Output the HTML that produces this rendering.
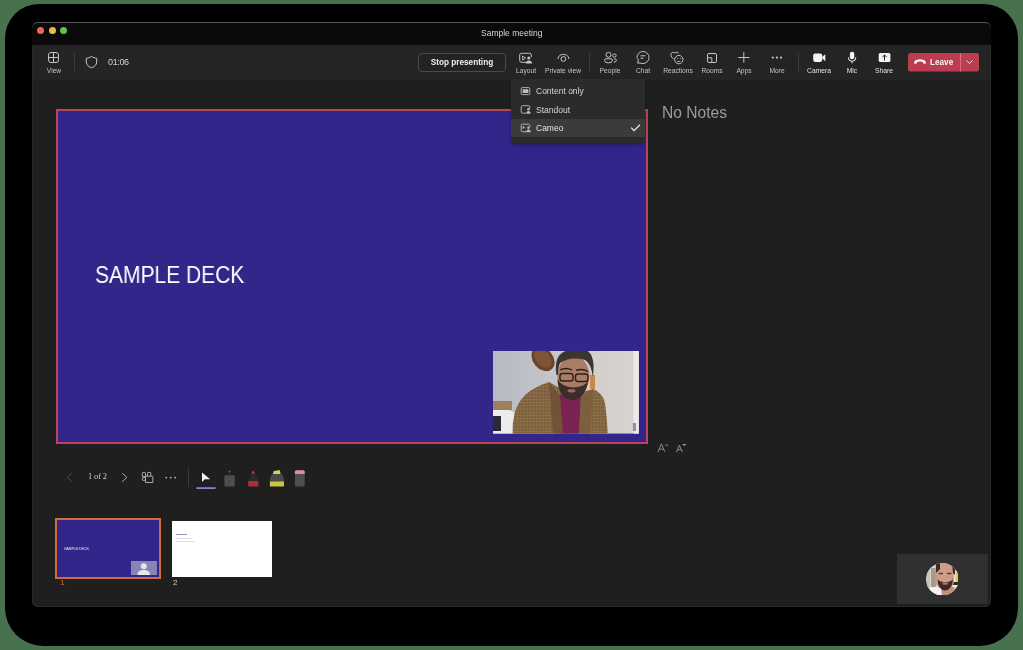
<!DOCTYPE html>
<html><head><meta charset="utf-8">
<style>
*{margin:0;padding:0;box-sizing:border-box}
html,body{width:1023px;height:650px;overflow:hidden;background:#48724e;font-family:"Liberation Sans",sans-serif}
div{will-change:transform}
div,svg,span{position:absolute}
#shadow{left:5px;top:4px;width:1013px;height:641.5px;background:#000;border-radius:34px 34px 38px 38px}
#win{left:32px;top:22px;width:959px;height:585px;background:#1f1f1f;border-radius:6px;overflow:hidden;box-shadow:inset 0 0 0 1px #2a2a2a}
#title{left:32px;top:22px;width:959px;height:23px;background:#0a0a0a;border-radius:6px 6px 0 0;border-top:1px solid #5a5a5a}
#tool{left:33px;top:45px;width:957px;height:34.6px;background:#242424}
.dot{width:7px;height:7px;border-radius:50%}
.lbl{font-size:6.7px;line-height:8px;color:#c2c2c2;text-align:center;width:50px;white-space:nowrap;top:67px}
svg{overflow:visible}
</style></head><body>
<div id="shadow"></div>
<div id="win"></div>
<div id="title"></div>
<div id="tool"></div>
<div class="dot" style="left:37px;top:27px;background:#ec6559"></div>
<div class="dot" style="left:49px;top:27px;background:#f0b847"></div>
<div class="dot" style="left:60px;top:27px;background:#5fc24d"></div>
<div style="left:481px;top:29px;font-size:8.5px;line-height:9px;color:#d8d8d8">Sample meeting</div>

<!-- toolbar -->
<svg style="left:0;top:0" width="1023" height="650" viewBox="0 0 1023 650">
 <g fill="none" stroke="#c4c4c4" stroke-width="1">
  <!-- view grid -->
  <rect x="48.5" y="52.5" width="10" height="10" rx="2.5"/>
  <line x1="53.5" y1="52.5" x2="53.5" y2="62.5"/><line x1="48.5" y1="57.5" x2="58.5" y2="57.5"/>
  <!-- shield -->
  <path d="M91.5 56.3 C89.5 57.8 88 58.2 86.3 58.2 V62 C86.3 65 88.6 66.8 91.5 67.8 C94.4 66.8 96.7 65 96.7 62 V58.2 C95 58.2 93.5 57.8 91.5 56.3Z"/>
 </g>
 <line x1="74.5" y1="53" x2="74.5" y2="71" stroke="#3c3c3c"/>
 <line x1="589.5" y1="53" x2="589.5" y2="72" stroke="#3c3c3c"/>
 <line x1="798.5" y1="53" x2="798.5" y2="72" stroke="#3c3c3c"/>
</svg>
<div style="left:107.5px;top:57px;font-size:9px;line-height:10px;color:#d2d2d2;letter-spacing:-0.35px">01:06</div>
<div class="lbl" style="left:28.5px">View</div>

<div style="left:418px;top:53px;width:88px;height:19px;border:1px solid #4a4a4a;border-radius:4px;background:#232323"></div>
<div style="left:418px;top:58px;width:88px;text-align:center;font-size:8.2px;line-height:10px;font-weight:bold;color:#f0f0f0">Stop presenting</div>
<svg style="left:0;top:0" width="1023" height="650" viewBox="0 0 1023 650">
 <g fill="none" stroke="#c4c4c4" stroke-width="1">
  <!-- layout -->
  <path d="M526 62.3 H521.5 Q519.7 62.3 519.7 60.5 V55 Q519.7 53.3 521.5 53.3 H529.5 Q531.3 53.3 531.3 55 V57"/>
  <path d="M522.6 56 L525.6 58 L522.6 60 Z" stroke-width="0.9"/>
  <!-- eye -->
  <path d="M557.8 59 A5.7 5.7 0 0 1 569 59"/>
  <circle cx="563.4" cy="59" r="2.4"/>
  <!-- people -->
  <circle cx="608.5" cy="54.8" r="2.5"/>
  <path d="M604.6 60 Q604.6 58.8 605.9 58.8 H611.1 Q612.4 58.8 612.4 60 V60.4 Q612.4 62.9 608.5 62.9 Q604.6 62.9 604.6 60.4Z"/>
  <circle cx="614.4" cy="55.6" r="1.7"/>
  <path d="M614 59 H615.2 Q616.4 59 616.4 60.2 Q616.4 62.2 613.8 62.2"/>
  <!-- chat -->
  <path d="M637.5 63 L638.5 60 Q637 58.3 637 57.5 A6 6 0 1 1 643 63.5 Q641 63.5 640 63 Z"/>
  <line x1="640.5" y1="55.8" x2="645.5" y2="55.8"/><line x1="640.5" y1="58.2" x2="643.5" y2="58.2"/>
  <!-- reactions -->
  <path d="M673.5 59.2 L671.9 57.3 Q670.3 55.3 671.2 53.4 Q672.3 51.6 674.3 52.6 L675 53.1 L675.7 52.6 Q677.6 51.6 678.6 53.2"/>
  <circle cx="678.8" cy="59.6" r="4.2"/>
  <!-- rooms -->
  <rect x="707.5" y="53.5" width="9" height="9" rx="1.5"/>
  <path d="M707.5 57.8 H711.8 V62.5"/>
  <!-- apps -->
  <line x1="743.8" y1="52" x2="743.8" y2="62.7"/><line x1="738.3" y1="57.5" x2="749.4" y2="57.5"/>
 </g>
 <g fill="#c4c4c4">
  <circle cx="528.8" cy="58" r="1.6"/>
  <path d="M525.8 63.5 Q525.8 60.5 528.8 60.5 Q532 60.5 532 63.5Z"/>
  <circle cx="677.3" cy="58.6" r="0.55"/><circle cx="680.3" cy="58.6" r="0.55"/><path d="M676.6 61 Q678.8 63 681 61 Z"/>
  <circle cx="772.8" cy="57.6" r="1.1"/><circle cx="776.9" cy="57.6" r="1.1"/><circle cx="781" cy="57.6" r="1.1"/>
 </g>
 <g fill="#f4f4f4">
  <!-- camera -->
  <rect x="813.2" y="53.4" width="9" height="8.5" rx="1.8"/>
  <path d="M821.5 57.6 L825.3 54.2 V61.2 Z"/>
  <!-- mic -->
  <rect x="849.9" y="51.7" width="4.4" height="7.5" rx="2.2"/>
  <!-- share -->
  <rect x="878.7" y="52.9" width="11.7" height="9.1" rx="1.6"/>
 </g>
 <path d="M848.3 57.3 Q848.3 61.3 852.1 61.3 Q855.9 61.3 855.9 57.3 M852.1 61.3 V63.3" fill="none" stroke="#f4f4f4" stroke-width="1"/>
 <path d="M884.5 60.5 V55 M882.3 57.2 L884.5 55 L886.7 57.2" fill="none" stroke="#262626" stroke-width="1"/>
 <!-- leave -->
 <rect x="908" y="53" width="71" height="18.5" rx="2.5" fill="#bc3d52"/>
 <line x1="960.5" y1="53" x2="960.5" y2="71.5" stroke="#e67a8a" stroke-width="0.8"/>
 <path d="M966.5 60.5 L969.5 63.5 L972.5 60.5" fill="none" stroke="#f4f4f4" stroke-width="0.9"/>
 <path d="M914 63.5 Q913.6 61.5 915.5 60.3 Q920 58 924.5 60.3 Q926.4 61.5 926 63.5 L923.5 63.8 L922.8 62 Q920 61.2 917.2 62 L916.5 63.8 Z" fill="#f4f4f4"/>
</svg>
<div style="left:930px;top:57.5px;font-size:8.2px;line-height:10px;color:#f6f6f6;font-weight:bold">Leave</div>
<div class="lbl" style="left:500.5px">Layout</div>
<div class="lbl" style="left:538.3px">Private view</div>
<div class="lbl" style="left:585.3px">People</div>
<div class="lbl" style="left:618px">Chat</div>
<div class="lbl" style="left:652.5px">Reactions</div>
<div class="lbl" style="left:687px">Rooms</div>
<div class="lbl" style="left:719.3px">Apps</div>
<div class="lbl" style="left:751.8px">More</div>
<div class="lbl" style="left:794.3px;color:#e4e4e4">Camera</div>
<div class="lbl" style="left:826.7px;color:#e4e4e4">Mic</div>
<div class="lbl" style="left:859.3px;color:#e4e4e4">Share</div>

<!-- slide -->
<div style="left:56px;top:108.5px;width:592px;height:334.5px;background:#32268a;border:2px solid #bb4559"></div>
<div style="left:95px;top:262px;font-size:23.6px;line-height:26px;color:#fff;transform:scaleX(0.89);transform-origin:0 0;white-space:nowrap">SAMPLE DECK</div>
<div style="left:662px;top:103.5px;font-size:15.6px;line-height:18px;color:#9c9c9c;white-space:nowrap">No Notes</div>
<!-- menu -->
<div style="left:511px;top:79px;width:133.5px;height:63.5px;background:#2b2b2b;border-radius:0 0 4px 4px;box-shadow:0 3px 5px -1px rgba(0,0,0,0.35)"></div>
<div style="left:511px;top:118.8px;width:133.5px;height:18.4px;background:#3b3b3b"></div>
<div style="left:536.3px;top:86px;font-size:8.5px;line-height:10px;color:#d6d6d6;white-space:nowrap">Content only</div>
<div style="left:536.3px;top:104.5px;font-size:8.5px;line-height:10px;color:#d6d6d6;white-space:nowrap">Standout</div>
<div style="left:536.3px;top:123px;font-size:8.5px;line-height:10px;color:#e6e6e6;white-space:nowrap">Cameo</div>
<svg style="left:0;top:0" width="1023" height="650" viewBox="0 0 1023 650">
 <path d="M631.2 127.6 L634 130.6 L640 124.8" fill="none" stroke="#f0f0f0" stroke-width="1.2"/>
 <g fill="none" stroke="#bdbdbd" stroke-width="0.9">
  <rect x="521.2" y="87.6" width="8.6" height="7" rx="1.2"/>
  <path d="M526 113.2 H522.5 Q521.2 113.2 521.2 112 V107 Q521.2 105.7 522.5 105.7 H528.5 Q529.8 105.7 529.8 107 V108.5"/>
  <path d="M526 131.7 H522.5 Q521.2 131.7 521.2 130.5 V125.5 Q521.2 124.2 522.5 124.2 H528.5 Q529.8 124.2 529.8 125.5 V127"/>
 </g>
 <g fill="#bdbdbd">
  <rect x="522.6" y="89.3" width="5.8" height="3.6" rx="0.5"/>
  <circle cx="528.4" cy="109.2" r="1.2"/><path d="M526.3 113.8 Q526.3 111 528.4 111 Q530.6 111 530.6 113.8Z"/>
  <circle cx="528.4" cy="127.7" r="1.2"/><path d="M526.3 132.3 Q526.3 129.5 528.4 129.5 Q530.6 129.5 530.6 132.3Z"/>
  <path d="M522.7 126 L525 127.5 L522.7 129 Z"/>
 </g>
</svg>

<!-- cameo video -->
<svg style="left:492.7px;top:351.3px;overflow:hidden" width="146.6" height="82.6" viewBox="0 0 146.6 82.6">
 <defs>
  <linearGradient id="wall" x1="0" y1="0" x2="1" y2="0">
   <stop offset="0" stop-color="#b7bac2"/><stop offset="0.4" stop-color="#c4c5ca"/><stop offset="0.7" stop-color="#d4cfca"/><stop offset="1" stop-color="#d8d4d1"/>
  </linearGradient>
  <filter id="bl" x="-5%" y="-5%" width="110%" height="110%"><feGaussianBlur stdDeviation="0.6"/></filter>
  <pattern id="plaid" width="3.2" height="3.2" patternUnits="userSpaceOnUse">
   <rect width="3.2" height="3.2" fill="#846640"/><rect width="1" height="3.2" fill="#745a3a"/><rect width="3.2" height="0.9" fill="#90724c"/>
  </pattern>
 </defs>
 <rect width="146.6" height="82.6" fill="url(#wall)"/>
 <g filter="url(#bl)">
  <rect x="140.5" y="0" width="5" height="82.6" fill="#ebebec"/>
  <rect x="140" y="72" width="3" height="8" fill="#9090b0"/>
  <ellipse cx="50" cy="8" rx="10" ry="13.5" fill="#6a4428" transform="rotate(-40 50 8)"/>
  <ellipse cx="50.5" cy="7.5" rx="7" ry="10.5" fill="#7f5538" transform="rotate(-40 50 8)"/>
  <rect x="0" y="50" width="19" height="9" fill="#a07f60"/>
  <path d="M0 59 H16 Q24 61 23 70 L21 82.6 H0Z" fill="#ececec"/>
  <rect x="0" y="65" width="8" height="15" fill="#2c2c30"/>
  <rect x="97" y="24" width="5" height="14" fill="#c68a4c"/>
  <path d="M19.6 82.6 Q19 62 27 50 Q36 37 56 31 L72 40 L86 42 L100 38 Q110 42 112 52 Q114 66 114.7 82.6Z" fill="url(#plaid)"/>
  <path d="M65.6 44 L88 43 L86 82.6 L67 82.6Z" fill="#7b2152"/>
  <path d="M56 31 L67 45 L70 82.6 L60 82.6 Q58 60 56 31Z" fill="#6f5337"/>
  <path d="M100 38 L88 46 L86 82.6 L97 82.6Z" fill="#7d5f3d"/>
  <path d="M68 30 L92 30 L90 44 Q80 50 70 44Z" fill="#8c5c4a"/>
  <ellipse cx="80.5" cy="25" rx="16" ry="20" fill="#aa7b66"/>
  <path d="M64.5 28 Q65 47 79 49.5 Q93 47 95 30 Q91 36 80 36.5 Q69 36 64.5 28Z" fill="#3a2e2a"/>
  <ellipse cx="78.5" cy="39.8" rx="4" ry="1.8" fill="#a5606a"/>
  <path d="M63.4 24 Q60 2 76 -1 L93 -1 Q103 4 99.8 26 Q98 12 92 9 Q78 5 67 12 Q65 16 65 24Z" fill="#3a3431"/>
  <path d="M67 19 Q73 16 79 19 M83 19.5 Q89 17 95 20.5" stroke="#2a201c" stroke-width="1.4" fill="none"/>
  <rect x="67" y="22.5" width="13" height="7.5" rx="2.5" fill="none" stroke="#2a201c" stroke-width="1.4"/>
  <rect x="82.5" y="23" width="12.5" height="7.5" rx="2.5" fill="none" stroke="#2a201c" stroke-width="1.4"/>
 </g>
</svg>

<!-- slide controls -->
<div style="left:87.5px;top:472.2px;font-family:'Liberation Serif',serif;font-size:8.4px;line-height:10px;color:#cfcfcf;white-space:nowrap;letter-spacing:-0.1px">1 of 2</div>
<svg style="left:0;top:0" width="1023" height="650" viewBox="0 0 1023 650">
 <path d="M72 473.2 L67.3 477.5 L72 481.7" fill="none" stroke="#505050" stroke-width="0.9"/>
 <path d="M122.2 473.2 L126.9 477.5 L122.2 481.7" fill="none" stroke="#b8b8b8" stroke-width="0.9"/>
 <g fill="none" stroke="#b8b8b8" stroke-width="0.9">
  <path d="M145.5 482.5 V477 Q145.5 476.2 146.3 476.2 H152 Q152.8 476.2 152.8 477 V482.5 Z"/>
  <path d="M145.5 476.2 V473.2 Q145.5 472.5 144.8 472.5 H143 Q142.3 472.5 142.3 473.2 V476 Q142.3 476.6 143 476.6 H145.5"/>
  <path d="M147.5 476.2 V473.2 Q147.5 472.5 148.2 472.5 H150 Q150.8 472.5 150.8 473.2 V476.2"/>
  <path d="M145.5 477.5 H143 Q142.3 477.5 142.3 478.2 V479.5 Q142.3 480.3 143 480.3 H145.5"/>
 </g>
 <g fill="#c8c8c8"><circle cx="166.3" cy="477.6" r="0.85"/><circle cx="170.7" cy="477.6" r="0.85"/><circle cx="175.1" cy="477.6" r="0.85"/></g>
 <line x1="188.5" y1="468.4" x2="188.5" y2="486.8" stroke="#3a3a3a" stroke-width="1"/>
 <path d="M202 472.4 L202 482 L204.8 479.3 L210.2 479.3 Z" fill="#f4f4f4"/>
 <rect x="196.2" y="487.3" width="19.7" height="1.6" rx="0.8" fill="#8985d6"/>
 <!-- laser -->
 <rect x="224.4" y="475.3" width="10.4" height="11.1" rx="1" fill="#4e4e4e"/>
 <circle cx="229.6" cy="480.5" r="1.4" fill="#3a3a3a" stroke="#6a6a6a" stroke-width="0.5"/>
 <line x1="229.6" y1="472.5" x2="229.6" y2="475.3" stroke="#6a2a2a" stroke-width="0.8"/>
 <circle cx="229.6" cy="471.4" r="1" fill="#c83044"/>
 <!-- pen -->
 <path d="M253.2 470.3 L255 473.5 Q258.3 477 258.3 481 V486.4 H248.2 V481 Q248.2 477 251.4 473.5 Z" fill="#2a2a2a"/>
 <path d="M253.2 470.3 L255 473.5 H251.4 Z" fill="#d83046"/>
 <rect x="248.2" y="481" width="10.1" height="5.4" fill="#b02a3c"/>
 <!-- highlighter -->
 <path d="M273 474 L273.5 471.2 L279.6 469.9 L280.6 474 Z" fill="#dcd640"/>
 <path d="M272 474 H281.6 Q283.9 477 283.9 480 V486.4 H269.9 V480 Q269.9 477 272 474Z" fill="#4a4a4a"/>
 <rect x="269.9" y="481.5" width="14" height="4.9" fill="#cdc53a"/>
 <!-- eraser -->
 <rect x="294.9" y="470.3" width="9.8" height="16.1" rx="1.5" fill="#4e4e4e"/>
 <path d="M294.9 474 V471.8 Q294.9 470.3 296.4 470.3 H303.2 Q304.7 470.3 304.7 471.8 V474 Z" fill="#e78a9a"/>
 <!-- font size -->
 <path d="M658 451.9 L661.4 443.8 L664.8 451.9 M659.2 449.2 H663.6" fill="none" stroke="#a4a4a4" stroke-width="0.8"/>
 <path d="M665.3 446 L666.7 444.3 L668.1 446" fill="none" stroke="#a4a4a4" stroke-width="0.7"/>
 <path d="M676.5 452.1 L679.4 445.3 L682.3 452.1 M677.5 449.8 H681.3" fill="none" stroke="#a4a4a4" stroke-width="0.8"/>
 <path d="M682.3 444.1 H686.2 L684.25 446.1 Z" fill="#a4a4a4"/>
</svg>
<!-- thumbnails -->
<div style="left:54.9px;top:518.2px;width:105.8px;height:60.5px;border:2.2px solid #cf6e35;background:#32268a"></div>
<div style="left:63.8px;top:545.5px;font-size:4.4px;line-height:5px;color:#f0f0f0;white-space:nowrap;transform:scaleX(0.8);transform-origin:0 0">SAMPLE DECK</div>
<div style="left:131.4px;top:561px;width:25.6px;height:14px;background:#8884b8"></div>
<svg style="left:131.4px;top:561px" width="25.6" height="14" viewBox="0 0 25.6 14">
 <circle cx="12.8" cy="5.2" r="3" fill="#e6e6ef"/>
 <path d="M6.5 14 Q6.5 9 12.8 9 Q19 9 19 14Z" fill="#e6e6ef"/>
</svg>
<div style="left:59.5px;top:577.5px;font-size:8px;line-height:10px;color:#d0733a">1</div>
<div style="left:171.7px;top:520.6px;width:100.4px;height:55.6px;background:#ffffff"></div>
<div style="left:176px;top:534px;width:11px;height:1px;background:#9a90cc"></div>
<div style="left:176px;top:537.8px;width:16px;height:0.7px;background:#dedee6"></div>
<div style="left:176px;top:540.8px;width:19px;height:0.7px;background:#dedee6"></div>
<div style="left:172.5px;top:577.5px;font-size:8px;line-height:10px;color:#cfcfcf">2</div>
<!-- self view -->
<div style="left:897px;top:554px;width:90.7px;height:50px;background:#303030"></div>

<svg style="left:925.8px;top:562.6px;overflow:hidden" width="32.7" height="32.7" viewBox="0 0 32.7 32.7">
 <defs>
  <clipPath id="cc"><circle cx="16.35" cy="16.3" r="16.3"/></clipPath>
  <filter id="bl2" x="-10%" y="-10%" width="120%" height="120%"><feGaussianBlur stdDeviation="0.55"/></filter>
 </defs>
 <g clip-path="url(#cc)">
  <rect width="32.7" height="32.7" fill="#dcdad6"/>
  <g filter="url(#bl2)">
   <rect x="5" y="5" width="5" height="22" fill="#a89a88"/>
   <rect x="1" y="8" width="3" height="18" fill="#c9c2b8"/>
   <rect x="27" y="8" width="6" height="16" fill="#f0e8d8"/>
   <rect x="29.5" y="10" width="3.2" height="12" fill="#e8cc50"/>
   <rect x="26" y="19" width="7" height="3" fill="#2a2a2a"/>
   <path d="M0 26 Q8 22 18 25 L20 32.7 H0Z" fill="#f2f2f2"/>
   <path d="M15 24 L28 24 L30 32.7 L16 32.7Z" fill="#c49078"/>
   <path d="M9.5 0 H28 V18 Q28 26 19 26 Q9.5 26 9.5 18Z" fill="#cf9c88"/>
   <path d="M10 0 H14 V6 L10 10Z" fill="#3a2a24"/>
   <path d="M26 0 H29 V12 L27 10Z" fill="#3a2a24"/>
   <path d="M11.5 16 Q12 27 19 27.5 Q26.5 27 27 16 Q25 19.5 19 19 Q13.5 19.5 11.5 16Z" fill="#3d2a24"/>
   <ellipse cx="19.2" cy="20.5" rx="3" ry="1.3" fill="#b77270"/>
   <path d="M12.5 10.5 H17 M21 10.5 H25.5" stroke="#5a3e34" stroke-width="1.3"/>
  </g>
 </g>
</svg>

</body></html>
